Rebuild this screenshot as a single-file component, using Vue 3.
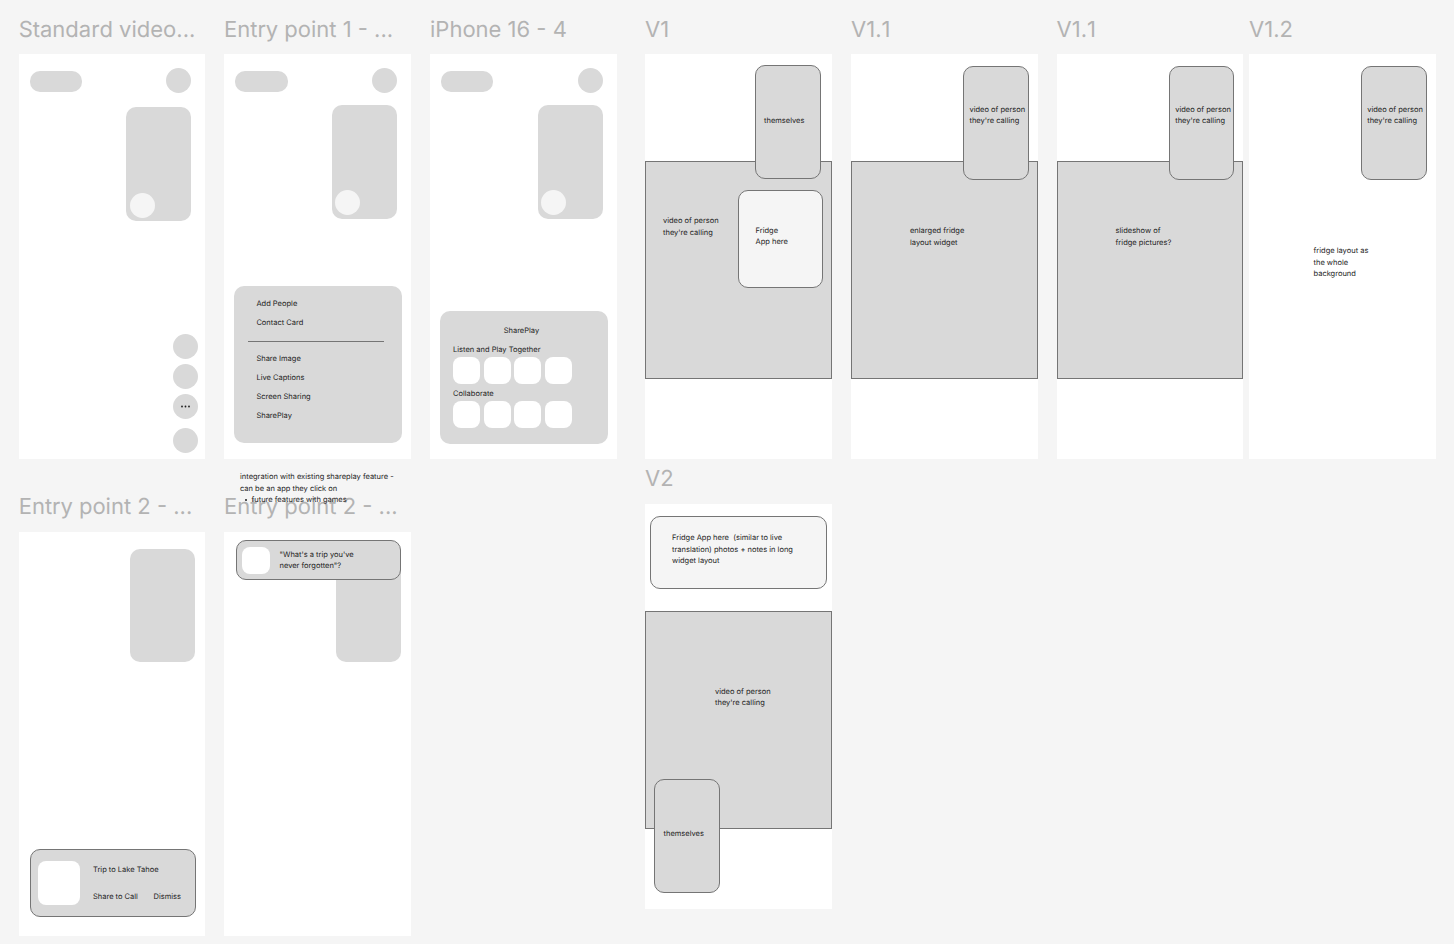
<script setup>
const menuTop = ['Add People', 'Contact Card']
const menuBottom = ['Share Image', 'Live Captions', 'Screen Sharing', 'SharePlay']
const tiles = [1, 2, 3, 4]
</script>

<template>
  <div class="canvas">
    <!-- row 1 -->
    <section class="frame f-standard">
      <h3 class="title">Standard video...</h3>
      <div class="pill"></div>
      <div class="dot top-dot"></div>
      <div class="self self-a"><span class="self-dot"></span></div>
      <div class="side-buttons">
        <div class="dot"></div>
        <div class="dot"></div>
        <div class="dot more">
          <svg width="9" height="3" viewBox="0 0 9 3"><circle cx="1" cy="1.5" r="0.9" /><circle cx="4.5" cy="1.5" r="0.9" /><circle cx="8" cy="1.5" r="0.9" /></svg>
        </div>
        <div class="dot last"></div>
      </div>
    </section>

    <section class="frame f-entry1">
      <h3 class="title">Entry point 1 - ...</h3>
      <div class="pill"></div>
      <div class="dot top-dot"></div>
      <div class="self self-b"><span class="self-dot"></span></div>
      <div class="menu">
        <div v-for="item in menuTop" :key="item" class="menu-item">{{ item }}</div>
        <div class="menu-line"></div>
        <div v-for="item in menuBottom" :key="item" class="menu-item">{{ item }}</div>
      </div>
    </section>

    <section class="frame f-iphone">
      <h3 class="title">iPhone 16 - 4</h3>
      <div class="pill"></div>
      <div class="dot top-dot"></div>
      <div class="self self-b"><span class="self-dot"></span></div>
      <div class="share">
        <div class="share-title">SharePlay</div>
        <div class="share-label">Listen and Play Together</div>
        <div class="tile-row"><span v-for="t in tiles" :key="t" class="tile"></span></div>
        <div class="share-label second">Collaborate</div>
        <div class="tile-row"><span v-for="t in tiles" :key="t" class="tile"></span></div>
      </div>
    </section>

    <section class="frame f-v1">
      <h3 class="title">V1</h3>
      <div class="video"><p class="txt v1-video">video of person<br>they're calling</p></div>
      <div class="card v1-self"><p class="txt">themselves</p></div>
      <div class="fridge"><p class="txt">Fridge<br>App here</p></div>
    </section>

    <section class="frame f-v11">
      <h3 class="title">V1.1</h3>
      <div class="video"><p class="txt enlarged">enlarged fridge<br>layout widget</p></div>
      <div class="card caller"><p class="txt">video of person<br>they're calling</p></div>
    </section>

    <section class="frame f-v11b">
      <h3 class="title">V1.1</h3>
      <div class="video"><p class="txt slideshow">slideshow of<br>fridge pictures?</p></div>
      <div class="card caller"><p class="txt">video of person<br>they're calling</p></div>
    </section>

    <section class="frame f-v12">
      <h3 class="title">V1.2</h3>
      <div class="card caller"><p class="txt">video of person<br>they're calling</p></div>
      <p class="txt whole">fridge layout as<br>the whole<br>background</p>
    </section>

    <!-- row 2 -->
    <section class="frame f-entry2">
      <h3 class="title">Entry point 2 - ...</h3>
      <div class="self-plain"></div>
      <div class="trip">
        <span class="trip-tile"></span>
        <div class="trip-body">
          <div class="txt">Trip to Lake Tahoe</div>
          <div class="txt trip-actions"><span>Share to Call</span><span>Dismiss</span></div>
        </div>
      </div>
    </section>

    <section class="frame f-entry2b">
      <h3 class="title">Entry point 2 - ...</h3>
      <div class="self-plain"></div>
      <div class="prompt">
        <span class="prompt-tile"></span>
        <p class="txt">"What's a trip you've<br>never forgotten"?</p>
      </div>
    </section>

    <section class="frame f-v2">
      <h3 class="title">V2</h3>
      <div class="long-widget">
        <p class="txt">Fridge App here&nbsp; (similar to live<br>translation) photos + notes in long<br>widget layout</p>
      </div>
      <div class="video v2-video"><p class="txt v2-text">video of person<br>they're calling</p></div>
      <div class="card v2-self"><p class="txt">themselves</p></div>
    </section>

    <!-- loose note, sits on top of the title below it -->
    <div class="note txt">
      integration with existing shareplay feature -<br>can be an app they click on
      <ul><li>future features with games</li></ul>
    </div>
  </div>
</template>

<style>
html, body {
  background: #f5f5f5;
}
</style>

<style scoped>
.canvas {
  position: relative;
  width: 1454px;
  height: 944px;
  overflow: hidden;
  background: #f5f5f5;
  font-family: Inter, "Liberation Sans", sans-serif;
  text-rendering: geometricPrecision;
}

.frame {
  position: absolute;
  width: 187px;
  height: 405px;
  background: #fff;
}

.f-standard { left: 18.7px; top: 54px; width: 186.4px; }
.f-entry1 { left: 224px; top: 54px; }
.f-iphone { left: 430px; top: 54px; }
.f-v1 { left: 645px; top: 54px; }
.f-v11 { left: 851px; top: 54px; }
.f-v11b { left: 1056.6px; top: 54px; width: 186.6px; }
.f-v12 { left: 1249px; top: 54px; }
.f-entry2 { left: 18.7px; top: 531.7px; width: 186.4px; height: 404.5px; }
.f-entry2b { left: 224px; top: 531.7px; height: 404.5px; }
.f-v2 { left: 645px; top: 504px; }

.title {
  position: absolute;
  left: 0;
  top: -39.5px;
  margin: 0;
  font-size: 22px;
  line-height: 30px;
  font-weight: 400;
  color: #b3b3b3;
  white-space: nowrap;
  font-kerning: none;
}

.f-entry2 .title,
.f-entry2b .title { top: -39.7px; }

.f-v2 .title { top: -40px; }

.txt {
  margin: 0;
  font-size: 7.5px;
  line-height: 11.4px;
  color: #1e1e1e;
  white-space: nowrap;
}

.pill {
  position: absolute;
  left: 11.3px;
  top: 17px;
  width: 52.4px;
  height: 21.4px;
  border-radius: 10px;
  background: #d9d9d9;
}

.f-iphone .pill { left: 11px; }

.dot {
  width: 25px;
  height: 25px;
  border-radius: 50%;
  background: #d9d9d9;
}

.top-dot {
  position: absolute;
  left: 147.5px;
  top: 13.5px;
}

.self {
  position: absolute;
  width: 65px;
  height: 113.5px;
  border-radius: 10px;
  background: #d9d9d9;
}

.self-a { left: 107.3px; top: 53.3px; }
.self-b { left: 107.8px; top: 51px; }

.self-dot {
  position: absolute;
  left: 3.7px;
  bottom: 3.3px;
  width: 25px;
  height: 25px;
  border-radius: 50%;
  background: #f5f5f5;
}

.side-buttons {
  position: absolute;
  left: 154px;
  top: 280px;
  display: flex;
  flex-direction: column;
  gap: 5px;
}

.more {
  display: flex;
  align-items: center;
  justify-content: center;
}

.more svg { fill: #1e1e1e; }

.last { margin-top: 3.5px; }

.menu {
  position: absolute;
  left: 10.4px;
  top: 232.4px;
  box-sizing: border-box;
  width: 167.6px;
  height: 157px;
  padding: 8px 0 0 22px;
  border-radius: 10px;
  background: #d9d9d9;
}

.menu-item {
  font-size: 7.5px;
  line-height: 19px;
  color: #1e1e1e;
}

.menu-line {
  width: 136px;
  height: 1px;
  margin: 8.5px 0 7.6px -8.5px;
  background: #757575;
}

.share {
  position: absolute;
  left: 10px;
  top: 257px;
  box-sizing: border-box;
  width: 167.6px;
  height: 132.5px;
  padding: 14.3px 0 0 13px;
  border-radius: 10px;
  background: #d9d9d9;
}

.share-title,
.share-label {
  font-size: 7.5px;
  line-height: 11.4px;
  color: #1e1e1e;
}

.share-title { padding-left: 50.7px; }
.share-label { margin: 7.6px 0 1.3px; }
.share-label.second { margin-top: 3.8px; }

.tile-row {
  display: flex;
  gap: 3.5px;
}

.tile {
  width: 27px;
  height: 27px;
  border-radius: 8px;
  background: #fff;
}

.video {
  position: absolute;
  left: 0;
  top: 107px;
  box-sizing: border-box;
  width: 100%;
  height: 217.6px;
  border: 1px solid #757575;
  background: #d9d9d9;
}

.card {
  position: absolute;
  box-sizing: border-box;
  width: 65.5px;
  height: 114px;
  border: 1px solid #757575;
  border-radius: 10px;
  background: #d9d9d9;
}

.v1-self {
  left: 110px;
  top: 11px;
  padding: 48.6px 0 0 8px;
}

.caller {
  top: 12px;
  padding: 36.6px 0 0 5.2px;
}

.f-v11 .caller { left: 112.3px; }
.f-v11b .caller { left: 112.4px; }
.f-v12 .caller { left: 112px; }

.fridge {
  position: absolute;
  left: 93px;
  top: 136px;
  box-sizing: border-box;
  width: 85px;
  height: 98px;
  padding: 33.6px 0 0 16.5px;
  border: 1px solid #757575;
  border-radius: 10px;
  background: #f5f5f5;
}

.v1-video { padding: 53.2px 0 0 17px; }
.enlarged { padding: 63.4px 0 0 58px; }
.slideshow { padding: 63.4px 0 0 58px; }

.whole {
  position: absolute;
  left: 64.5px;
  top: 191.3px;
}

.self-plain {
  position: absolute;
  left: 111.3px;
  top: 17px;
  width: 65px;
  height: 113.5px;
  border-radius: 10px;
  background: #d9d9d9;
}

.trip {
  position: absolute;
  left: 11.3px;
  top: 317.8px;
  box-sizing: border-box;
  width: 165.6px;
  height: 67.6px;
  display: flex;
  padding: 11px 0 0 7px;
  gap: 12.5px;
  border: 1px solid #757575;
  border-radius: 10px;
  background: #d9d9d9;
}

.trip-tile {
  width: 42.5px;
  height: 44px;
  border-radius: 8px;
  background: #fff;
}

.trip-body {
  display: flex;
  flex-direction: column;
  gap: 16px;
  width: 88px;
  padding-top: 2.6px;
}

.trip-actions {
  display: flex;
  justify-content: space-between;
}

.f-entry2b .self-plain { left: 112px; }

.prompt {
  position: absolute;
  left: 11.5px;
  top: 8.8px;
  box-sizing: border-box;
  width: 165.2px;
  height: 39.2px;
  display: flex;
  align-items: center;
  gap: 10px;
  padding-left: 5.5px;
  border: 1px solid #757575;
  border-radius: 10px;
  background: #d9d9d9;
}

.prompt-tile {
  width: 27.5px;
  height: 27px;
  border-radius: 8px;
  background: #fff;
}

.long-widget {
  position: absolute;
  left: 5px;
  top: 12px;
  box-sizing: border-box;
  width: 177px;
  height: 73px;
  padding: 15.4px 0 0 21px;
  border: 1px solid #757575;
  border-radius: 10px;
  background: #f5f5f5;
}

.v2-video { top: 107px; height: 217.5px; }
.v2-text { padding: 73.9px 0 0 69px; }

.v2-self {
  left: 9px;
  top: 275px;
  padding: 47.7px 0 0 8.5px;
}

.note {
  position: absolute;
  left: 240px;
  top: 471.3px;
  white-space: nowrap;
}

.note ul {
  margin: 0;
  padding: 0 0 0 11.5px;
  list-style: none;
}

.note li {
  position: relative;
}

.note li::before {
  content: "";
  position: absolute;
  left: -6.5px;
  top: 5px;
  width: 2.2px;
  height: 2.2px;
  border-radius: 50%;
  background: #1e1e1e;
}
</style>
